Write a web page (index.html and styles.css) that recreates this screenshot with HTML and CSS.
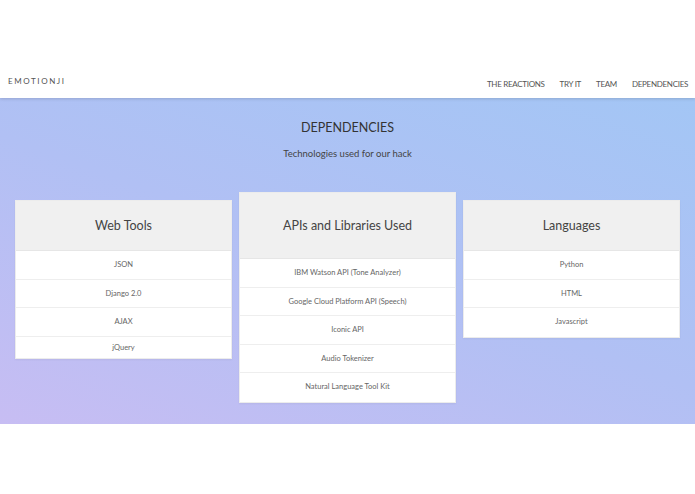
FILE: index.html
```html
<!DOCTYPE html>
<html>

<head>
    <meta charset="UTF-8">
    <title>Emotionji</title>
    <link rel="stylesheet" href="styles.css">
</head>

<body>
    <nav class="navbar">
        <a class="brand" href="#">EMOTIONJI</a>
        <ul class="nav-links">
            <li><a href="#">THE REACTIONS</a></li>
            <li><a href="#">TRY IT</a></li>
            <li><a href="#">TEAM</a></li>
            <li><a href="#">DEPENDENCIES</a></li>
        </ul>
    </nav>

    <section class="dependencies">
        <h2>DEPENDENCIES</h2>
        <p class="lead">Technologies used for our hack</p>

        <div class="tables">
            <div class="card">
                <h3 class="card-header">Web Tools</h3>
                <ul>
                    <li>JSON</li>
                    <li>Django 2.0</li>
                    <li>AJAX</li>
                    <li class="short">jQuery</li>
                </ul>
            </div>

            <div class="card featured">
                <h3 class="card-header">APIs and Libraries Used</h3>
                <ul>
                    <li>IBM Watson API (Tone Analyzer)</li>
                    <li>Google Cloud Platform API (Speech)</li>
                    <li>Iconic API</li>
                    <li>Audio Tokenizer</li>
                    <li>Natural Language Tool Kit</li>
                </ul>
            </div>

            <div class="card">
                <h3 class="card-header">Languages</h3>
                <ul>
                    <li>Python</li>
                    <li>HTML</li>
                    <li>Javascript</li>
                </ul>
            </div>
        </div>
    </section>
</body>

</html>
```

FILE: styles.css
```css
* {
    box-sizing: border-box;
}

body {
    font-family: 'Lato', 'Open Sans', sans-serif;
    background-color: #ffffff;
    color: #555555;
    margin: 0;
    padding: 0;
}

a {
    color: inherit;
    text-decoration: none;
}

ul {
    list-style-type: none;
    margin: 0;
    padding: 0;
}

.navbar {
    height: 98px;
    padding: 63px 7px 0 8px;
    display: flex;
    align-items: center;
    justify-content: space-between;
    background-color: #ffffff;
    box-shadow: 0 1px 3px rgba(0, 0, 0, 0.15);
    position: relative;
    z-index: 1;
}

.brand {
    font-size: 8px;
    letter-spacing: 1.6px;
    color: #555555;
}

.nav-links {
    display: flex;
    gap: 15px;
}

.nav-links a {
    font-size: 8px;
    letter-spacing: -0.3px;
    color: #555555;
}

.dependencies {
    height: 326px;
    padding-top: 20px;
    background: linear-gradient(200deg, #a3c6f5 0%, #b1c0f4 50%, #c7bdf3 100%);
    text-align: center;
}

.dependencies h2 {
    margin: 0;
    font-size: 12.5px;
    font-weight: 400;
    color: #333333;
    line-height: 20px;
}

.lead {
    margin: 6px 0 0;
    font-size: 9.5px;
    color: #444444;
    line-height: 20px;
}

.tables {
    display: flex;
    align-items: flex-start;
    gap: 7px;
    padding: 0 15px;
    margin-top: 36px;
}

.card {
    flex: 1;
    background-color: #ffffff;
    border: 1px solid #ececec;
    box-shadow: 0 1px 2px rgba(0, 0, 0, 0.05);
}

.card-header {
    margin: 0;
    height: 50px;
    line-height: 50px;
    background-color: #f0f0f0;
    border-bottom: 1px solid #e6e6e6;
    font-size: 12.5px;
    font-weight: 400;
    color: #444444;
}

.card li {
    height: 28.5px;
    line-height: 28px;
    font-size: 7.5px;
    color: #666666;
    border-bottom: 1px solid #eeeeee;
}

.card li:last-child {
    border-bottom: none;
}

.card li.short {
    height: 21px;
    line-height: 21px;
}

.featured {
    margin-top: -8px;
}

.featured .card-header {
    height: 66px;
    line-height: 66px;
}
```
